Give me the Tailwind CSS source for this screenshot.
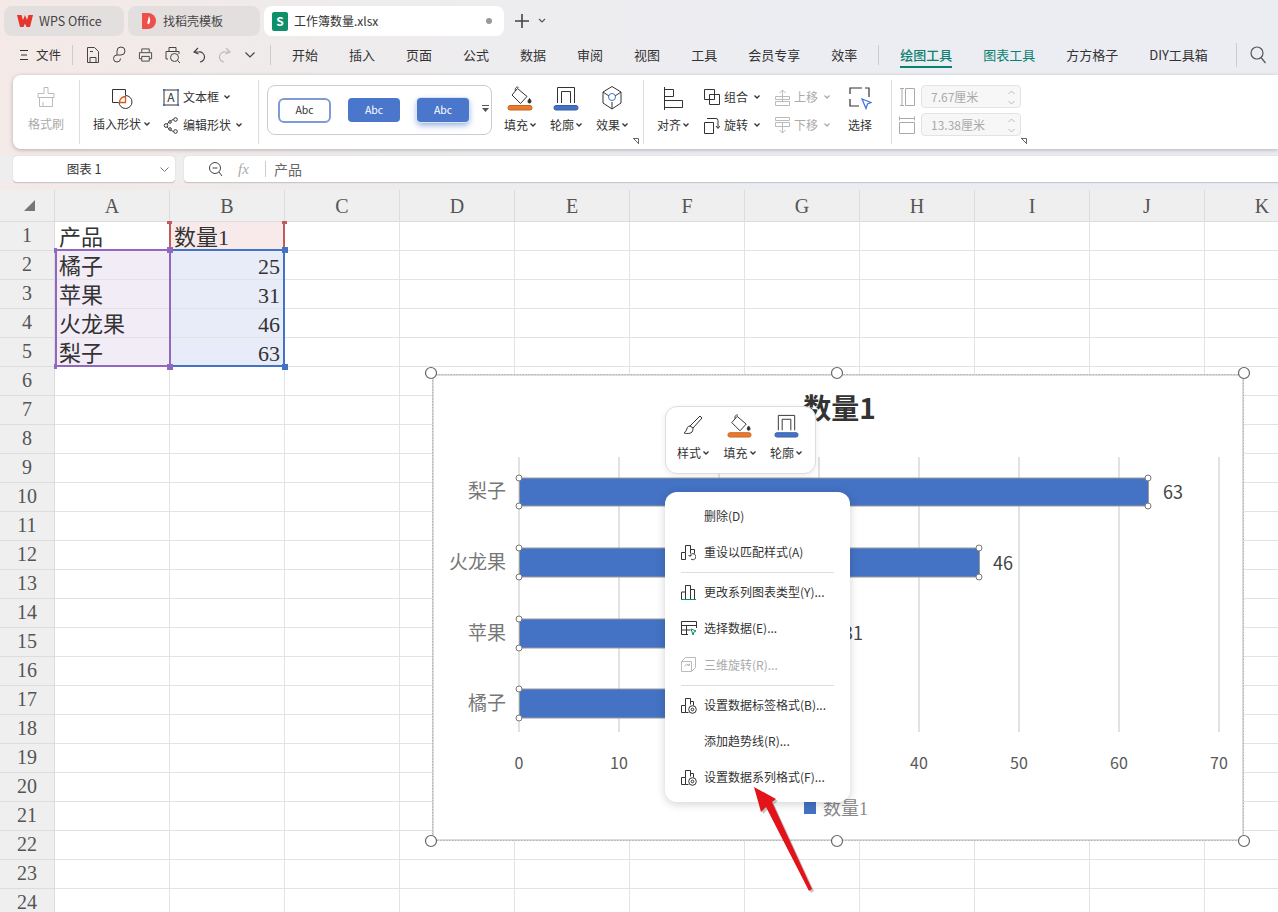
<!DOCTYPE html>
<html lang="zh-CN">
<head>
<meta charset="UTF-8">
<title>工作簿数量.xlsx - WPS Office</title>
<script src="https://cdn.jsdelivr.net/npm/@tailwindcss/browser@4"></script>
</head>
<body class="w-[1278px] h-[912px] overflow-hidden relative bg-white text-[#333] text-[12px] font-['Noto_Sans_CJK_SC',sans-serif]">

<!-- window chrome -->
<div class="h-[190px] bg-[linear-gradient(100deg,#f4e9e7_0%,#eeeced_30%,#ecedf2_60%)] flex flex-col">
  <!-- tabs -->
  <div class="h-[37px] pt-[6px] pl-[4px] flex gap-[4px] items-start">
    <div class="w-[120px] h-[30px] rounded-lg bg-[#e4dfdf] flex items-center pl-[13px] gap-[6px] text-[12.5px] text-[#444]">
      <svg class="w-[16px] h-[14px]" viewBox="0 0 16 14"><path d="M0 1h4.500l1.500 5 2-5 2 5 1.500-5H16l-3 12H9.500L8 9.500 6.500 13H3z" fill="#e5352c"/></svg>
      WPS Office
    </div>
    <div class="w-[132px] h-[30px] rounded-lg bg-[#e4dfdf] flex items-center pl-[14px] gap-[7px] text-[12px] text-[#444]">
      <svg class="w-[14px] h-[18px]" viewBox="0 0 14 18"><path d="M0 1h6a8 8 0 0 1 0 16H0z" fill="#ee4f48"/><path d="M7 4C8 7 9 9 7 12 5 13 5 10 6 8z" fill="#fff"/></svg>
      找稻壳模板
    </div>
    <div class="w-[240px] h-[30px] rounded-lg bg-white flex items-center pl-[8px] gap-[6px] text-[12px] text-[#333]">
      <div class="w-[16px] h-[19px] rounded-[2px] bg-[#0f8f6a] text-white text-[12px] font-bold flex items-center justify-center leading-none">S</div>
      工作簿数量.xlsx
      <div class="ml-auto mr-[12px] w-[6px] h-[6px] rounded-full bg-[#999]"></div>
    </div>
    <div class="ml-[7px] h-[30px] flex items-center gap-[9px]">
      <svg class="w-[14px] h-[14px]" viewBox="0 0 14 14" stroke="#444" stroke-width="1.600"><path d="M7 0v14M0 7h14"/></svg>
      <svg class="w-[8px] h-[6px]" viewBox="0 0 8 6" fill="none" stroke="#555" stroke-width="1.200"><path d="M1 1l3 3 3-3"/></svg>
    </div>
  </div>

  <!-- menu row -->
  <div class="h-[38px] pb-[2px] flex items-center text-[13px] text-[#333] relative">
    <svg class="ml-[20px] w-[8px] h-[10px]" viewBox="0 0 8 10" stroke="#333"><path d="M0 .5h8M1 5h6M0 9.500h8"/></svg>
    <span class="ml-[8px] text-[12.5px]">文件</span>
    <div class="ml-[11px] w-px h-[20px] bg-[#ccc]"></div>
    <div class="ml-[13px] flex items-center gap-[12px]">
      <svg class="w-[14px] h-[18px]" viewBox="0 0 14 18" fill="none" stroke="#444"><path d="M1.500 1.500h7l4 4v11h-11zM4 16.500v-5h6v5M4 5.500h3"/></svg>
      <svg class="w-[14px] h-[18px]" viewBox="0 0 14 18" fill="none" stroke="#444"><path d="M5 9V5a4 4 0 1 1 4 4H5a3.500 3.500 0 1 0 3.500 3.500"/></svg>
      <svg class="w-[15px] h-[16px]" viewBox="0 0 16 16" fill="none" stroke="#444"><path d="M4 5V1.500h8V5M4 12H1.500V5.500h13V12H12M4 9.500h8v5H4z"/></svg>
      <svg class="w-[16px] h-[18px]" viewBox="0 0 16 18" fill="none" stroke="#444"><path d="M4 5V1.500h7V5M3 13H1V5.500h13V8"/><circle cx="9.500" cy="11.500" r="4"/><path d="M12.500 14.500l2.500 2.500"/></svg>
      <svg class="w-[13px] h-[16px]" viewBox="0 0 13 16" fill="none" stroke="#444" stroke-width="1.200"><path d="M5 1L1 5l4.500 2M1.500 5H6a5 5 0 0 1 1 10"/></svg>
      <svg class="w-[13px] h-[16px]" viewBox="0 0 13 16" fill="none" stroke="#bbb" stroke-width="1.200"><path d="M8 1l4 4-4.500 2M11.500 5H7a5 5 0 0 0-1 10"/></svg>
      <svg class="ml-[2px] w-[10px] h-[6px]" viewBox="0 0 10 6" fill="none" stroke="#444" stroke-width="1.200"><path d="M.5.500l4.500 4.500L9.500.500"/></svg>
    </div>
    <div class="ml-[15px] w-px h-[20px] bg-[#ccc]"></div>
    <div class="ml-[21px] flex items-center gap-[31px]">
      <span>开始</span><span>插入</span><span>页面</span><span>公式</span><span>数据</span><span>审阅</span><span>视图</span><span>工具</span><span>会员专享</span><span>效率</span>
    </div>
    <div class="ml-[21px] w-px h-[20px] bg-[#ccc]"></div>
    <div class="ml-[21px] flex items-center gap-[31px]">
      <span class="relative text-[#0b7f70] font-medium">绘图工具<span class="absolute left-0 right-0 top-[21px] h-[2px] bg-[#0b7f70]"></span></span>
      <span class="text-[#0b7f70]">图表工具</span>
      <span>方方格子</span>
      <span>DIY工具箱</span>
    </div>
    <div class="ml-[28px] w-px h-[24px] bg-[#ccc]"></div>
    <svg class="ml-[13px] w-[16px] h-[18px]" viewBox="0 0 16 18" fill="none" stroke="#555" stroke-width="1.200"><circle cx="7" cy="7" r="6"/><path d="M11 11.500l4.500 5.500"/></svg>
  </div>

  <!-- ribbon -->
  <div class="ml-[13px] h-[74px] rounded-l-lg bg-white shadow-[0_1px_4px_rgba(0,0,0,0.25)] flex items-stretch py-[5px]">
    <!-- format painter -->
    <div class="w-[67px] flex flex-col items-center text-[#aaa] border-r border-[#ddd]">
      <svg class="mt-[6px] w-[18px] h-[22px]" viewBox="0 0 18 22" fill="none" stroke="#bbb"><path d="M7 1.500h4v6h6v4H1v-4h6zM2.500 11.500v9h13v-9M6 20v-4"/></svg>
      <span class="mt-[7px]">格式刷</span>
    </div>

    <!-- insert / edit shape -->
    <div class="w-[179px] flex border-r border-[#ddd] text-[#333]">
      <div class="w-[83px] flex flex-col items-center">
        <svg class="mt-[8px] w-[22px] h-[22px]" viewBox="0 0 22 22" fill="none" stroke="#333"><path d="M14.500 1.500H1.500v13h6M14.500 1.500v6"/><path d="M14.500 7.500A6.500 6.500 0 1 1 8 14"/><path d="M14.500 14.500H8.500A6 6 0 0 1 14.500 8.500z" stroke="#d4591a" stroke-width="1.300"/></svg>
        <span class="mt-[5px] flex items-center gap-[3px]">插入形状<svg class="w-[6px] h-[4px]" viewBox="0 0 6 4" fill="none" stroke="#333" stroke-width="1.300"><path d="M.5.500L3 3 5.500.500"/></svg></span>
      </div>
      <div class="flex flex-col pt-[8px] gap-[10px]">
        <div class="h-[18px] flex items-center gap-[4px]">
          <svg class="w-[16px] h-[17px]" viewBox="0 0 16 17" font-family="'Noto Sans CJK SC',sans-serif">
            <path d="M1 2v13M15 2v13M2 1h12M2 16h12" stroke="#333" fill="none"/>
            <path d="M0 0h2v2H0zM14 0h2v2h-2zM0 15h2v2H0zM14 15h2v2h-2z" fill="#3b6fe0"/>
            <text x="8" y="13" font-size="12" text-anchor="middle" fill="#333">A</text>
          </svg>
          文本框<svg class="ml-[1px] w-[6px] h-[4px]" viewBox="0 0 6 4" fill="none" stroke="#333" stroke-width="1.300"><path d="M.5.500L3 3 5.500.500"/></svg>
        </div>
        <div class="h-[18px] flex items-center gap-[4px]">
          <svg class="w-[16px] h-[17px]" viewBox="0 0 15 17" fill="none" stroke="#333"><path d="M12 2C6 3 4 7 2.500 8.500 4 10 6 14 12 15"/><circle cx="12" cy="2.500" r="1.800" fill="#fff"/><circle cx="2.500" cy="8.500" r="1.800" fill="#fff"/><circle cx="12" cy="14.500" r="1.800" fill="#fff"/><circle cx="6.500" cy="5" r="1.300" fill="#fff"/><circle cx="6.500" cy="12" r="1.300" fill="#fff"/></svg>
          编辑形状<svg class="ml-[1px] w-[6px] h-[4px]" viewBox="0 0 6 4" fill="none" stroke="#333" stroke-width="1.300"><path d="M.5.500L3 3 5.500.500"/></svg>
        </div>
      </div>
    </div>

    <!-- shape styles -->
    <div class="w-[385px] border-r border-[#ddd] flex relative">
      <div class="ml-[8px] mt-[5px] w-[225px] h-[50px] rounded-lg border border-[#ccc] flex items-center pl-[10px] gap-[17px] text-[10.5px] relative">
        <div class="w-[53px] h-[25px] rounded-[6px] border-2 border-[#7e9bd6] bg-white flex items-center justify-center">Abc</div>
        <div class="w-[52px] h-[24px] rounded-[4px] bg-[#4a76cc] text-white flex items-center justify-center">Abc</div>
        <div class="w-[52px] h-[24px] rounded-[4px] bg-[#4a76cc] text-white flex items-center justify-center shadow-[0_3px_6px_rgba(68,114,196,0.6)] ring-1 ring-[#dbe4f5]">Abc</div>
        <svg class="absolute right-[2px] top-[19px] w-[7px] h-[8px]" viewBox="0 0 7 8" fill="#555"><path d="M0 0h7v1H0zM0 3h7L3.500 7z"/></svg>
      </div>
      <div class="ml-[5px] flex text-[#333]">
        <div class="w-[46px] flex flex-col items-center">
          <svg class="mt-[5px] w-[26px] h-[26px]" viewBox="0 0 26 26" fill="none" stroke="#333"><path d="M10.500 3.500l9.500 8-6.500 7-8.500-8.500zM8.500 6C7.500 3.500 9.500 1 11.500 2.500"/><path d="M22.500 13.500c1 1.500 1.500 2 1.500 3a1.500 1.500 0 0 1-3 0c0-1 .5-1.500 1.500-3z" fill="#333"/><rect x="1" y="20.500" width="24" height="4.500" rx="2" fill="#e67a2e" stroke="#c9651f"/></svg>
          <span class="mt-[5px] flex items-center gap-[2px]">填充<svg class="w-[6px] h-[4px]" viewBox="0 0 6 4" fill="none" stroke="#333" stroke-width="1.300"><path d="M.5.500L3 3 5.500.500"/></svg></span>
        </div>
        <div class="w-[46px] flex flex-col items-center">
          <svg class="mt-[5px] w-[26px] h-[26px]" viewBox="0 0 26 26" fill="none" stroke="#333"><path d="M4.500 18V2.500h17V18M8.500 18V6.500h9V18"/><rect x="1" y="20.500" width="24" height="4.500" rx="2" fill="#4472c4" stroke="#3860a8"/></svg>
          <span class="mt-[5px] flex items-center gap-[2px]">轮廓<svg class="w-[6px] h-[4px]" viewBox="0 0 6 4" fill="none" stroke="#333" stroke-width="1.300"><path d="M.5.500L3 3 5.500.500"/></svg></span>
        </div>
        <div class="w-[46px] flex flex-col items-center">
          <svg class="mt-[5px] w-[22px] h-[26px]" viewBox="0 0 22 26" fill="none" stroke="#333"><path d="M11 1.500l9 5.500v11l-9 6-9-6V7zM2 7l6 4M20 7l-6 4M11 17v7"/><circle cx="11" cy="12" r="3.500" stroke="#4472c4"/></svg>
          <span class="mt-[5px] flex items-center gap-[2px]">效果<svg class="w-[6px] h-[4px]" viewBox="0 0 6 4" fill="none" stroke="#333" stroke-width="1.300"><path d="M.5.500L3 3 5.500.500"/></svg></span>
        </div>
      </div>
      <svg class="absolute right-[4px] bottom-[0px] w-[6px] h-[6px]" viewBox="0 0 6 6" fill="none" stroke="#666"><path d="M0 .5h5.500V6M.5.500l5 5"/></svg>
    </div>

    <!-- arrange -->
    <div class="w-[248px] border-r border-[#ddd] flex text-[#333]">
      <div class="ml-[12px] w-[34px] flex flex-col items-center">
        <svg class="mt-[7px] w-[19px] h-[23px]" viewBox="0 0 19 23" fill="none" stroke="#333"><path d="M.5 0v23M.5 2.500h9v7h-9M.5 13.500h18v7H.5"/></svg>
        <span class="mt-[6px] flex items-center gap-[2px]">对齐<svg class="w-[6px] h-[4px]" viewBox="0 0 6 4" fill="none" stroke="#333" stroke-width="1.300"><path d="M.5.500L3 3 5.500.500"/></svg></span>
      </div>
      <div class="ml-[14px] flex flex-col pt-[8px] gap-[10px]">
        <div class="h-[18px] flex items-center gap-[4px]">
          <svg class="w-[16px] h-[16px]" viewBox="0 0 16 16" fill="none" stroke="#333"><path d="M.5.500h10v10H.5zM5.500 5.500h10v10h-10z"/></svg>
          组合<svg class="ml-[2px] w-[6px] h-[4px]" viewBox="0 0 6 4" fill="none" stroke="#333" stroke-width="1.300"><path d="M.5.500L3 3 5.500.500"/></svg>
        </div>
        <div class="h-[18px] flex items-center gap-[4px]">
          <svg class="w-[16px] h-[17px]" viewBox="0 0 16 17" fill="none" stroke="#333"><path d="M.5 5.500h9v11h-9zM3 1.500h9a2 2 0 0 1 2 2V11M12 9l2 2.500L16 9"/></svg>
          旋转<svg class="ml-[2px] w-[6px] h-[4px]" viewBox="0 0 6 4" fill="none" stroke="#333" stroke-width="1.300"><path d="M.5.500L3 3 5.500.500"/></svg>
        </div>
      </div>
      <div class="ml-[15px] flex flex-col pt-[8px] gap-[10px] text-[#aaa]">
        <div class="h-[18px] flex items-center gap-[4px]">
          <svg class="w-[15px] h-[17px]" viewBox="0 0 15 17" fill="none" stroke="#bbb"><path d="M.5 7.500h14v3H.5zM.5 12.500h14v4H.5zM7.500 12V1M4.500 4l3-3 3 3"/></svg>
          上移<svg class="ml-[2px] w-[6px] h-[4px]" viewBox="0 0 6 4" fill="none" stroke="#aaa" stroke-width="1.300"><path d="M.5.500L3 3 5.500.500"/></svg>
        </div>
        <div class="h-[18px] flex items-center gap-[4px]">
          <svg class="w-[15px] h-[17px]" viewBox="0 0 15 17" fill="none" stroke="#bbb"><path d="M.5.500h14v3H.5zM.5 5.500h14v4H.5zM7.500 5v11M4.500 13l3 3 3-3"/></svg>
          下移<svg class="ml-[2px] w-[6px] h-[4px]" viewBox="0 0 6 4" fill="none" stroke="#aaa" stroke-width="1.300"><path d="M.5.500L3 3 5.500.500"/></svg>
        </div>
      </div>
      <div class="ml-[17px] w-[26px] flex flex-col items-center">
        <svg class="mt-[7px] w-[23px] h-[23px]" viewBox="0 0 23 23" fill="none" stroke="#333" stroke-width="1.200"><path d="M1 7V1h12M16 1h4v9M1 12v7h9"/><path d="M13 12l9 3.500-3.500 1.500-1.500 4.500z" stroke="#3b6fe0" fill="#fff"/></svg>
        <span class="mt-[6px]">选择</span>
      </div>
    </div>

    <!-- size -->
    <div class="flex-1 relative text-[#aaa]">
      <div class="ml-[7px] mt-[5px] flex flex-col gap-[5px]">
        <div class="flex items-center gap-[6px]">
          <svg class="w-[16px] h-[18px]" viewBox="0 0 16 18" fill="none" stroke="#aaa"><path d="M1 .5h4M1 17.500h4M3 .5v17M6.500 .5h9v17h-9z"/></svg>
          <div class="w-[100px] h-[23px] rounded-[4px] border border-[#e3e3e3] bg-[#f7f7f7] pl-[9px] flex items-center relative">7.67厘米
            <svg class="absolute right-[5px] top-[4px] w-[7px] h-[15px]" viewBox="0 0 7 15" fill="none" stroke="#bbb"><path d="M.5 4L3.500 1l3 3M.5 11l3 3 3-3"/></svg>
          </div>
        </div>
        <div class="flex items-center gap-[6px]">
          <svg class="w-[16px] h-[18px]" viewBox="0 0 16 18" fill="none" stroke="#aaa"><path d="M.5 .5v4M15.500 .5v4M.5 2.500h15M.5 6.500h15v11H.5z"/></svg>
          <div class="w-[100px] h-[23px] rounded-[4px] border border-[#e3e3e3] bg-[#f7f7f7] pl-[9px] flex items-center relative">13.38厘米
            <svg class="absolute right-[5px] top-[4px] w-[7px] h-[15px]" viewBox="0 0 7 15" fill="none" stroke="#bbb"><path d="M.5 4L3.500 1l3 3M.5 11l3 3 3-3"/></svg>
          </div>
        </div>
      </div>
      <svg class="absolute left-[129px] bottom-[0px] w-[6px] h-[6px]" viewBox="0 0 6 6" fill="none" stroke="#666"><path d="M0 .5h5.500V6M.5.500l5 5"/></svg>
    </div>
  </div>

  <!-- formula bar -->
  <div class="mt-[7px] h-[27px] flex gap-[9px] pl-[13px] bg-[#eeeeee]">
    <div class="w-[162px] pr-[20px] rounded-[4px] bg-white border-b border-[#c8c8c8] shadow-[0_0_1px_rgba(0,0,0,0.3)] flex items-center justify-center relative text-[12.5px]">图表 1
      <svg class="absolute right-[6px] top-[11px] w-[9px] h-[6px]" viewBox="0 0 9 6" fill="none" stroke="#777"><path d="M.5.500L4.500 4.500 8.500.500"/></svg>
    </div>
    <div class="flex-1 rounded-l-[4px] bg-white border-b border-[#c8c8c8] shadow-[0_0_1px_rgba(0,0,0,0.3)] flex items-center text-[#555]">
      <svg class="ml-[24px] w-[15px] h-[16px]" viewBox="0 0 15 16" fill="none" stroke="#444"><circle cx="7" cy="7" r="5.500"/><path d="M4.500 7h5M11 11l3 4"/></svg>
      <span class="ml-[15px] w-[23px] italic font-['Liberation_Serif',serif] text-[15px] text-[#aaa]">fx</span>
      <div class="ml-[4px] w-px h-[16px] bg-[#ccc]"></div>
      <span class="ml-[8px] text-[14px] text-[#666]">产品</span>
    </div>
  </div>
</div>

<!-- sheet -->
<div id="sheet" class="grid grid-cols-[55px_repeat(11,115px)] grid-rows-[32px_repeat(24,29px)] font-['Liberation_Serif','Noto_Sans_CJK_SC',serif] text-[22px] text-[#333]"></div>

<!-- selected data ranges -->
<div class="absolute left-[55px] top-[221px] w-[230px] h-[146px]">
  <div class="absolute left-[114px] top-0 w-[116px] h-[28px] border-x-2 border-[#c55a5a]"></div>
  <div class="absolute left-0 top-[28px] w-[116px] h-[118px] border-2 border-[#9168bf]"></div>
  <div class="absolute left-[116px] top-[28px] w-[114px] h-[118px] border-y-2 border-r-2 border-[#4472c4]"></div>
  <div class="absolute left-[112px] top-[0px] w-[5px] h-[3px] bg-[#c55a5a]"></div>
  <div class="absolute left-[227px] top-[0px] w-[5px] h-[3px] bg-[#c55a5a]"></div>
  <div class="absolute -left-[1px] top-[27px] w-[3px] h-[5px] bg-[#9168bf]"></div>
  <div class="absolute left-[112px] top-[26px] w-[6px] h-[6px] bg-[#9168bf]"></div>
  <div class="absolute left-[227px] top-[26px] w-[6px] h-[6px] bg-[#4472c4]"></div>
  <div class="absolute -left-[1px] top-[143px] w-[3px] h-[5px] bg-[#9168bf]"></div>
  <div class="absolute left-[112px] top-[143px] w-[6px] h-[6px] bg-[#9168bf]"></div>
  <div class="absolute left-[227px] top-[143px] w-[6px] h-[6px] bg-[#4472c4]"></div>
</div>

<!-- chart object -->
<svg class="absolute left-[424px] top-[366px] w-[828px] h-[484px]" viewBox="424 366 828 484" font-family="'Noto Sans CJK SC',sans-serif">
  <rect x="433" y="375" width="810" height="465" fill="#fff" stroke="#dcdcdc" stroke-width="2"/>
  <rect x="432.500" y="374.500" width="811" height="466" fill="none" stroke="#aaa" stroke-dasharray="1.500 1.500" stroke-width="0.800"/>
  <text x="839.500" y="419" text-anchor="middle" font-size="28" font-weight="700" fill="#333">数量1</text>
  <g stroke="#e2e2e2" stroke-width="2">
    <path d="M519 457v275M619 457v275M719 457v275M819 457v275M919 457v275M1019 457v275M1119 457v275M1219 457v275"/>
  </g>
  <g fill="#4472c4" stroke="#9a9a9a">
    <rect x="519.500" y="478" width="629" height="28"/>
    <rect x="519.500" y="548" width="460" height="29"/>
    <rect x="519.500" y="619" width="310" height="29"/>
    <rect x="519.500" y="689" width="250" height="29"/>
  </g>
  <g fill="#fff" stroke="#777">
    <circle cx="519" cy="478" r="3"/><circle cx="519" cy="506" r="3"/><circle cx="1148" cy="478" r="3"/><circle cx="1148" cy="506" r="3"/>
    <circle cx="519" cy="548" r="3"/><circle cx="519" cy="577" r="3"/><circle cx="979" cy="548" r="3"/><circle cx="979" cy="577" r="3"/>
    <circle cx="519" cy="619" r="3"/><circle cx="519" cy="648" r="3"/><circle cx="519" cy="689" r="3"/><circle cx="519" cy="718" r="3"/>
  </g>
  <g font-size="19" fill="#777" text-anchor="end" font-family="'Liberation Serif','Noto Sans CJK SC',serif">
    <text x="506" y="498">梨子</text><text x="506" y="569">火龙果</text><text x="506" y="640">苹果</text><text x="506" y="710">橘子</text>
  </g>
  <g font-size="18" fill="#444">
    <text x="1163" y="499">63</text><text x="993" y="570">46</text><text x="843" y="640">31</text>
  </g>
  <g font-size="16" fill="#595959" text-anchor="middle">
    <text x="519" y="769">0</text><text x="619" y="769">10</text><text x="919" y="769">40</text><text x="1019" y="769">50</text><text x="1119" y="769">60</text><text x="1219" y="769">70</text>
  </g>
  <rect x="804" y="802" width="12" height="12" fill="#4472c4"/>
  <text x="823" y="815" font-size="18" fill="#888" font-family="'Liberation Serif','Noto Sans CJK SC',serif">数量1</text>
  <g fill="#fff" stroke="#666" stroke-width="1.200">
    <circle cx="431" cy="373" r="5.500"/><circle cx="837" cy="373" r="5.500"/><circle cx="1244" cy="373" r="5.500"/>
    <circle cx="431" cy="841" r="5.500"/><circle cx="837" cy="841" r="5.500"/><circle cx="1244" cy="841" r="5.500"/>
  </g>
</svg>

<!-- mini toolbar -->
<div class="absolute left-[665px] top-[406px] w-[151px] h-[68px] rounded-xl bg-white border border-[#ddd] shadow-[0_2px_6px_rgba(0,0,0,0.08)] flex justify-center gap-[10.500px] pt-[6px] pr-[2px] text-[#333]">
  <div class="w-[36px] flex flex-col items-center">
    <svg class="mt-[1px] w-[22px] h-[24px]" viewBox="0 0 22 24" fill="none" stroke="#333"><path d="M18 2l2 2-9 10-3-2zM8 12c-3 0-3 3-3.500 4S2 19 2 19c3 1 7 .5 8-1s1-3 1-4"/></svg>
    <span class="mt-[6px] flex items-center gap-[2px]">样式<svg class="w-[6px] h-[4px]" viewBox="0 0 6 4" fill="none" stroke="#333" stroke-width="1.300"><path d="M.5.500L3 3 5.500.500"/></svg></span>
  </div>
  <div class="w-[36px] flex flex-col items-center">
    <svg class="w-[25px] h-[25px]" viewBox="0 0 26 26" fill="none" stroke="#333"><path d="M10.500 3.500l9.500 8-6.500 7-8.500-8.500zM8.500 6C7.500 3.500 9.500 1 11.500 2.500"/><path d="M22.500 13.500c1 1.500 1.500 2 1.500 3a1.500 1.500 0 0 1-3 0c0-1 .5-1.500 1.500-3z" fill="#333"/><rect x="1" y="20.500" width="24" height="4.500" rx="2" fill="#e67a2e" stroke="#c9651f"/></svg>
    <span class="mt-[6px] flex items-center gap-[2px]">填充<svg class="w-[6px] h-[4px]" viewBox="0 0 6 4" fill="none" stroke="#333" stroke-width="1.300"><path d="M.5.500L3 3 5.500.500"/></svg></span>
  </div>
  <div class="w-[36px] flex flex-col items-center">
    <svg class="w-[25px] h-[25px]" viewBox="0 0 26 26" fill="none" stroke="#333"><path d="M4.500 18V2.500h17V18M8.500 18V6.500h9V18"/><rect x="1" y="20.500" width="24" height="4.500" rx="2" fill="#4472c4" stroke="#3860a8"/></svg>
    <span class="mt-[6px] flex items-center gap-[2px]">轮廓<svg class="w-[6px] h-[4px]" viewBox="0 0 6 4" fill="none" stroke="#333" stroke-width="1.300"><path d="M.5.500L3 3 5.500.500"/></svg></span>
  </div>
</div>

<!-- context menu -->
<div class="absolute left-[665px] top-[492px] w-[185px] h-[310px] rounded-xl bg-white shadow-[0_2px_10px_rgba(0,0,0,0.18)] px-[16px] pt-[6px] text-[12px] text-[#333] flex flex-col">
  <div class="h-[36px] pl-[23px] flex items-center">删除(D)</div>
  <div class="h-[36px] flex items-center gap-[8px]">
    <svg class="w-[15px] h-[17px]" viewBox="0 0 15 17" fill="none" stroke="#333"><path d="M.5 15.500v-7h4v7zM4.500 8.500v-7h5v8M9.500 5.500h4v4"/><path d="M9 12a3 3 0 1 1 1 3M7.500 11l1.500 1.500 1.500-1.500" stroke="#333"/></svg>
    重设以匹配样式(A)
  </div>
  <div class="h-px bg-[#ddd] my-[2px]"></div>
  <div class="h-[36px] -mt-[1px] flex items-center gap-[8px]">
    <svg class="w-[15px] h-[17px]" viewBox="0 0 15 17" fill="none" stroke="#333"><path d="M.5 15v-7h4v7M4.500 8V1.500h5V15M9.500 5.500h4V15"/><path d="M0 15.500h15" stroke="#0f8f6a"/></svg>
    更改系列图表类型(Y)...
  </div>
  <div class="h-[36px] flex items-center gap-[7px]">
    <svg class="w-[16px] h-[15px]" viewBox="0 0 16 15" fill="none" stroke="#333"><path d="M7 13.500H.5V.5h15V7M.5 4.500h15M5.500 4.500v9M.5 9h9"/><path d="M10 8l5 2-2 1-1 3z" stroke="#0f8f6a" fill="#fff"/></svg>
    选择数据(E)...
  </div>
  <div class="h-[37px] flex items-center gap-[8px] text-[#aaa]">
    <svg class="w-[15px] h-[15px]" viewBox="0 0 15 15" fill="none" stroke="#bbb"><path d="M.5 4.500h10v10H.5zM.5 4.500l4-4h10v10l-4 4M3.500 9.500a3 3 0 0 1 5-1M8.500 6.500v2h-2"/></svg>
    三维旋转(R)...
  </div>
  <div class="h-px bg-[#ddd] my-[2px]"></div>
  <div class="h-[36px] -mt-[1px] flex items-center gap-[7px]">
    <svg class="w-[16px] h-[17px]" viewBox="0 0 16 17" fill="none" stroke="#333"><path d="M.5 15.500v-7h4v7zM4.500 8.500v-7h5v6M9.500 4.500h3v4M4.500 15.500h3"/><circle cx="11.500" cy="12.500" r="3.800"/><circle cx="11.500" cy="12.500" r="1.300"/></svg>
    设置数据标签格式(B)...
  </div>
  <div class="h-[36px] pl-[23px] flex items-center">添加趋势线(R)...</div>
  <div class="h-[36px] flex items-center gap-[7px]">
    <svg class="w-[16px] h-[17px]" viewBox="0 0 16 17" fill="none" stroke="#333"><path d="M.5 15.500v-7h4v7zM4.500 8.500v-7h5v6M9.500 4.500h3v4M4.500 15.500h3"/><circle cx="11.500" cy="12.500" r="3.800"/><circle cx="11.500" cy="12.500" r="1.300"/></svg>
    设置数据系列格式(F)...
  </div>
</div>

<!-- red annotation arrow -->
<svg class="absolute left-[745px] top-[780px] w-[75px] h-[120px]" viewBox="745 780 75 120">
  <path d="M754 787L761 812 766 807 809 891 812 889 772 802 776 799z" fill="#555" opacity="0.35" transform="translate(2 2)"/>
  <path d="M754 787L761 812 766 807 809 891 812 889 772 802 776 799z" fill="#e3131b"/>
</svg>

<script>
  // spreadsheet grid, header row first and then 24 rows
  const sheet = document.getElementById('sheet');
  const columns = ['A', 'B', 'C', 'D', 'E', 'F', 'G', 'H', 'I', 'J', 'K'];
  const data = {
    1: ['产品', '数量1'],
    2: ['橘子', 25],
    3: ['苹果', 31],
    4: ['火龙果', 46],
    5: ['梨子', 63]
  };
  const headClass = 'bg-[#efefef] border-r border-b border-[#dcdcdc] flex items-center justify-center font-[\'Open_Sans\',sans-serif] text-[20px] text-[#555]';
  const cellClass = 'border-r border-b border-[#e3e3e3] px-[4px] leading-[32px] overflow-visible whitespace-nowrap';

  function addCell(className, text) {
    const cell = document.createElement('div');
    cell.className = className;
    if (text !== undefined) cell.textContent = text;
    sheet.appendChild(cell);
    return cell;
  }

  addCell(headClass).innerHTML = '<svg class="w-[11px] h-[11px] ml-[4px]" viewBox="0 0 11 11"><path d="M11 0v11H0z" fill="#777"/></svg>';
  columns.forEach(function (col) { addCell(headClass, col).classList.add('pt-[1px]'); });

  for (let row = 1; row <= 24; row++) {
    addCell(headClass, row).classList.add('pb-[2px]');
    columns.forEach(function (col, i) {
      const value = data[row] ? data[row][i] : undefined;
      const cell = addCell(cellClass, value);
      if (typeof value === 'number') cell.classList.add('text-right');
      if (row > 1 && row <= 5 && i === 0) cell.classList.add('bg-[#f2ecf7]', 'border-[#dcd9e4]');
      if (row > 1 && row <= 5 && i === 1) cell.classList.add('bg-[#e8ecf8]', 'border-[#d7dbe6]');
      if (row === 1 && i === 1) cell.classList.add('bg-[#f8eaea]');
    });
  }
</script>
</body>
</html>
